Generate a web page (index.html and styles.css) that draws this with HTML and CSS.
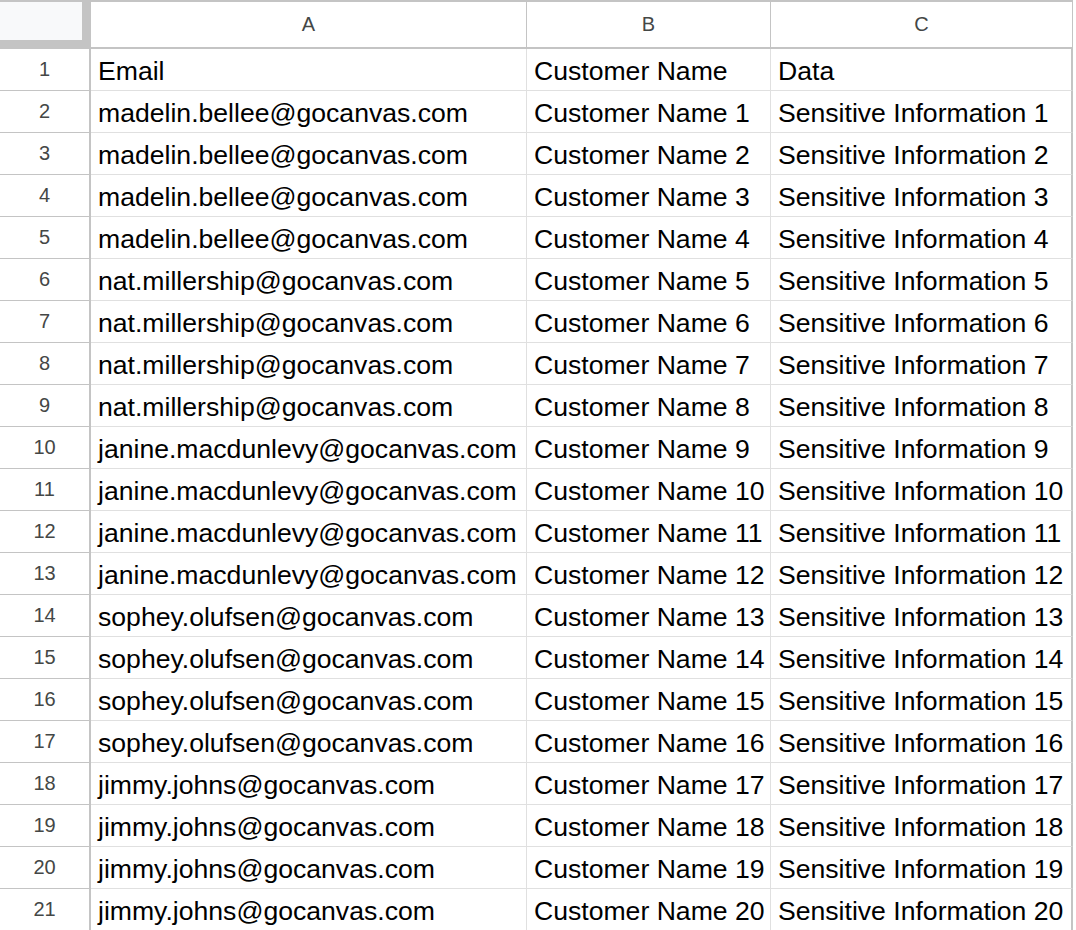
FILE: index.html
```html
<!DOCTYPE html>
<html>
<head>
<meta charset="utf-8">
<link rel="stylesheet" href="styles.css">
</head>
<body>
<div class="sheet">
  <div class="corner"></div>
  <div class="colhead">A</div>
  <div class="colhead">B</div>
  <div class="colhead">C</div>

  <div class="rownum">1</div><div class="cell">Email</div><div class="cell">Customer Name</div><div class="cell">Data</div>
  <div class="rownum">2</div><div class="cell">madelin.bellee@gocanvas.com</div><div class="cell">Customer Name 1</div><div class="cell">Sensitive Information 1</div>
  <div class="rownum">3</div><div class="cell">madelin.bellee@gocanvas.com</div><div class="cell">Customer Name 2</div><div class="cell">Sensitive Information 2</div>
  <div class="rownum">4</div><div class="cell">madelin.bellee@gocanvas.com</div><div class="cell">Customer Name 3</div><div class="cell">Sensitive Information 3</div>
  <div class="rownum">5</div><div class="cell">madelin.bellee@gocanvas.com</div><div class="cell">Customer Name 4</div><div class="cell">Sensitive Information 4</div>
  <div class="rownum">6</div><div class="cell">nat.millership@gocanvas.com</div><div class="cell">Customer Name 5</div><div class="cell">Sensitive Information 5</div>
  <div class="rownum">7</div><div class="cell">nat.millership@gocanvas.com</div><div class="cell">Customer Name 6</div><div class="cell">Sensitive Information 6</div>
  <div class="rownum">8</div><div class="cell">nat.millership@gocanvas.com</div><div class="cell">Customer Name 7</div><div class="cell">Sensitive Information 7</div>
  <div class="rownum">9</div><div class="cell">nat.millership@gocanvas.com</div><div class="cell">Customer Name 8</div><div class="cell">Sensitive Information 8</div>
  <div class="rownum">10</div><div class="cell">janine.macdunlevy@gocanvas.com</div><div class="cell">Customer Name 9</div><div class="cell">Sensitive Information 9</div>
  <div class="rownum">11</div><div class="cell">janine.macdunlevy@gocanvas.com</div><div class="cell">Customer Name 10</div><div class="cell">Sensitive Information 10</div>
  <div class="rownum">12</div><div class="cell">janine.macdunlevy@gocanvas.com</div><div class="cell">Customer Name 11</div><div class="cell">Sensitive Information 11</div>
  <div class="rownum">13</div><div class="cell">janine.macdunlevy@gocanvas.com</div><div class="cell">Customer Name 12</div><div class="cell">Sensitive Information 12</div>
  <div class="rownum">14</div><div class="cell">sophey.olufsen@gocanvas.com</div><div class="cell">Customer Name 13</div><div class="cell">Sensitive Information 13</div>
  <div class="rownum">15</div><div class="cell">sophey.olufsen@gocanvas.com</div><div class="cell">Customer Name 14</div><div class="cell">Sensitive Information 14</div>
  <div class="rownum">16</div><div class="cell">sophey.olufsen@gocanvas.com</div><div class="cell">Customer Name 15</div><div class="cell">Sensitive Information 15</div>
  <div class="rownum">17</div><div class="cell">sophey.olufsen@gocanvas.com</div><div class="cell">Customer Name 16</div><div class="cell">Sensitive Information 16</div>
  <div class="rownum">18</div><div class="cell">jimmy.johns@gocanvas.com</div><div class="cell">Customer Name 17</div><div class="cell">Sensitive Information 17</div>
  <div class="rownum">19</div><div class="cell">jimmy.johns@gocanvas.com</div><div class="cell">Customer Name 18</div><div class="cell">Sensitive Information 18</div>
  <div class="rownum">20</div><div class="cell">jimmy.johns@gocanvas.com</div><div class="cell">Customer Name 19</div><div class="cell">Sensitive Information 19</div>
  <div class="rownum">21</div><div class="cell">jimmy.johns@gocanvas.com</div><div class="cell">Customer Name 20</div><div class="cell">Sensitive Information 20</div>
</div>
</body>
</html>
```

FILE: styles.css
```css
html, body {
  margin: 0;
  padding: 0;
  background: #ffffff;
}

body {
  font-family: "Liberation Sans", Arial, sans-serif;
  overflow: hidden;
}

.sheet {
  display: grid;
  grid-template-columns: 91px 436px 244px 302px;
  grid-auto-rows: 42px;
  grid-template-rows: 49px;
  width: 1073px;
}

.corner {
  box-sizing: border-box;
  background: #f8f9fa;
  border-top: 2px solid #c4c4c4;
  border-right: 9px solid #c4c4c4;
  border-bottom: 9px solid #c4c4c4;
}

.colhead {
  box-sizing: border-box;
  border-top: 2px solid #c4c4c4;
  border-bottom: 2px solid #c4c4c4;
  border-right: 1px solid #c4c4c4;
  display: flex;
  align-items: center;
  justify-content: center;
  font-size: 20px;
  color: #444746;
}

.colhead:last-of-type {
  border-right-width: 2px;
}

.rownum {
  box-sizing: border-box;
  border-right: 2px solid #c4c4c4;
  border-bottom: 1px solid #c4c4c4;
  display: flex;
  align-items: center;
  justify-content: center;
  font-size: 20px;
  color: #444746;
}

.cell {
  box-sizing: border-box;
  border-right: 1px solid #e0e0e0;
  border-bottom: 1px solid #e0e0e0;
  display: flex;
  align-items: flex-end;
  padding: 0 0 4px 7px;
  font-size: 26.6px;
  line-height: 30px;
  color: #000000;
  white-space: nowrap;
  overflow: hidden;
}

.cell:nth-child(4n+4) {
  border-right: 2px solid #c4c4c4;
}
```
